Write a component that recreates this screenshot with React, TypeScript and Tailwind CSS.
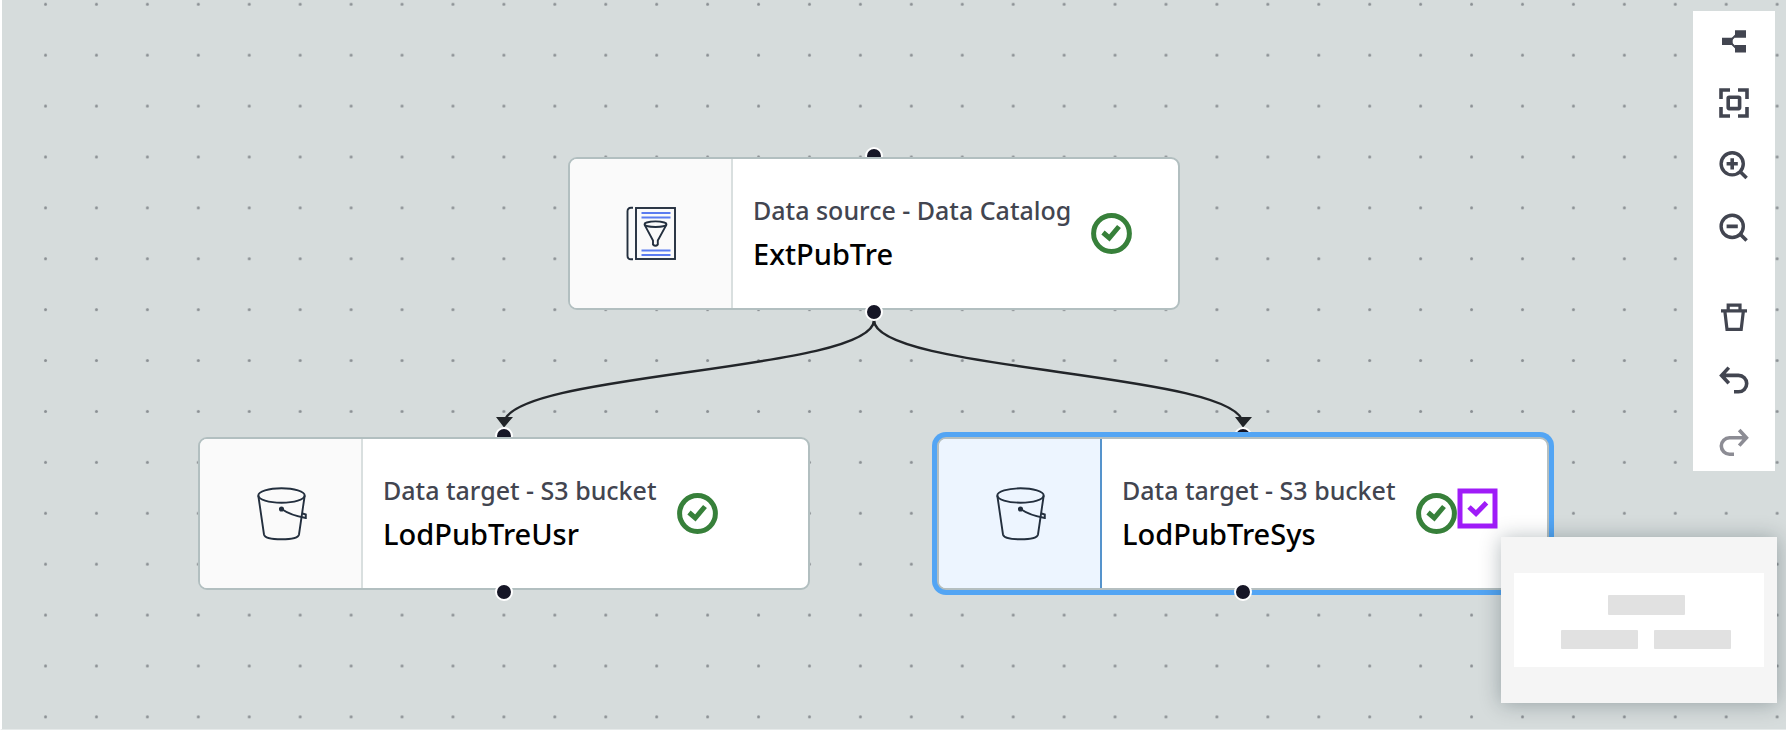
import React from "react";

const INK = "#232f3e";

function CatalogIcon() {
  return (
    <svg width="52" height="56" viewBox="0 0 52 56" fill="none" stroke={INK} strokeWidth="1.9" aria-hidden="true">
      <path d="M8 1.8H6Q2.5 1.8 2.5 5.3V49.7Q2.5 53.2 6 53.2H8" />
      <rect x="11" y="2" width="39" height="51" />
      <g stroke="#5b7cf0" strokeWidth="1.9">
        <path d="M16.5 7H45.5M16.5 11.5H45.5M16.5 44.5H45.5M16.5 49H45.5" />
      </g>
      <ellipse cx="30.5" cy="18.2" rx="11" ry="2.8" />
      <path d="M19.5 18.6L28 34.5V38.5Q30.5 41 32.8 38.5V34.5L41.5 18.6" />
    </svg>
  );
}

function BucketIcon() {
  return (
    <svg width="52" height="56" viewBox="-1 0 52 56" fill="none" stroke={INK} strokeWidth="1.9" aria-hidden="true">
      <ellipse cx="25.5" cy="9.5" rx="23.2" ry="7.2" />
      <path d="M2.3 9.5L8 48.5Q9 53.3 25.5 53.3Q42 53.3 43 48.5L48.7 9.5" />
      <circle cx="25.5" cy="23" r="1.6" fill={INK} />
      <path d="M25.5 23Q35 29.5 49.8 32V28.5L46.5 27.5" />
    </svg>
  );
}

function CheckCircle() {
  return (
    <svg className="shrink-0" width="41" height="41" viewBox="0 0 41 41" fill="none" stroke="#37803a" strokeWidth="5" role="img" aria-label="Valid">
      <circle cx="20.5" cy="20.5" r="17.9" />
      <path d="M12 19.5L18.3 25L28 13.5" />
    </svg>
  );
}

function CheckSquare() {
  return (
    <svg className="mb-[10px] shrink-0" width="41" height="41" viewBox="0 0 41 41" fill="none" stroke="#9f1cf8" strokeWidth="5" role="img" aria-label="Checked">
      <rect x="3" y="3" width="35" height="35" />
      <path d="M12 19L19 25.5L29.5 14.8" />
    </svg>
  );
}

type NodeProps = {
  kind: string;
  name: string;
  icon: React.ReactNode;
  place: string;
  selected?: boolean;
};

const PORT = "absolute left-1/2 size-[18px] -translate-x-1/2 rounded-full border-2 border-white bg-[#161626]";

function FlowNode({ kind, name, icon, place, selected = false }: NodeProps) {
  return (
    <div className={`absolute w-[612px] ${place}`}>
      <span className={`${PORT} -top-[10px]`} />
      <div
        className={`relative flex h-[153px] overflow-hidden rounded-[9px] border-2 bg-white ${
          selected ? "border-[#b5bfc0] ring-5 ring-[#53a5f4]" : "border-[#b2bfc0]"
        }`}
      >
        <div
          className={`flex w-[163px] shrink-0 items-center justify-center border-r-2 ${
            selected ? "border-[#5593cc] bg-[#edf5ff]" : "border-[#d9dfdf] bg-[#fafafa]"
          }`}
        >
          {icon}
        </div>
        <div className="flex items-center pl-5">
          <div className="pr-5 whitespace-nowrap">
            <div className="text-[25px] leading-10 font-medium text-[#424550]">{kind}</div>
            <div className="text-[29px] leading-12 font-medium text-black">{name}</div>
          </div>
          <CheckCircle />
          {selected && <CheckSquare />}
        </div>
      </div>
      <span className={`${PORT} -bottom-[11px]`} />
    </div>
  );
}

type ToolProps = { label: string; disabled?: boolean; gap?: boolean; children: React.ReactNode };

function Tool({ label, disabled = false, gap = false, children }: ToolProps) {
  return (
    <button
      type="button"
      aria-label={label}
      disabled={disabled}
      className={`flex h-[30px] w-[30px] items-center justify-center ${gap ? "mt-7" : ""} ${
        disabled ? "text-[#8c8c94]" : "text-[#424550]"
      }`}
    >
      <svg width="30" height="30" viewBox="0 0 30 30" fill="none" stroke="currentColor" strokeWidth="3.6" aria-hidden="true">
        {children}
      </svg>
    </button>
  );
}

function Toolbar() {
  return (
    <div className="absolute top-[11px] right-[11px] flex w-[82px] flex-col items-center gap-8 bg-white pt-[15px] pb-[15px]">
      <Tool label="Layout">
        <g fill="currentColor" stroke="none">
          <path d="M3 11.7H13.7V19H3ZM16 4.3H27V11.7H16ZM16 19H27V26.6H16Z" />
        </g>
        <path d="M12.5 13.5L17 9M12.5 17.5L17 22" strokeWidth="1.8" />
      </Tool>
      <Tool label="Fit to screen">
        <path d="M2 11V2H11M19 2H28V11M28 19V28H19M11 28H2V19" />
        <rect x="9.2" y="9.2" width="11.4" height="11.4" rx="1" />
      </Tool>
      <Tool label="Zoom in">
        <circle cx="13.2" cy="13.8" r="11.1" strokeWidth="3.4" />
        <path d="M21 21.4L27.6 28M13.2 8.2V19.4M7.6 13.8H18.8" />
      </Tool>
      <Tool label="Zoom out">
        <circle cx="13.2" cy="14.4" r="11.1" strokeWidth="3.4" />
        <path d="M21 22L27.6 28.6M7.6 14.4H18.8" />
      </Tool>
      <Tool label="Delete" gap>
        <path d="M2 8.8H28M9.2 8.8V3.2H21V8.8M5.8 8.8L8 27.4H22.2L24.4 8.8" strokeWidth="3.2" />
      </Tool>
      <Tool label="Undo">
        <path d="M9.8 3.6L2.6 11.4L9.8 19.2M3 11.4H19.5A8.2 8.2 0 0 1 19.5 27.8H15" />
      </Tool>
      <Tool label="Redo" disabled>
        <path d="M20.2 4L27.4 11.8L20.2 19.6M27 11.8H10.5A8.2 8.2 0 0 0 10.5 28.2H15" />
      </Tool>
    </div>
  );
}

function MiniMap() {
  return (
    <div className="absolute right-[9px] bottom-[26px] bg-[#f5f5f5] px-[13px] py-9 shadow-[0_1px_20px_rgba(0,28,36,0.3)]">
      <svg className="block bg-white" width="250" height="94" viewBox="0 0 250 94" fill="#e1e1e1" role="img" aria-label="Overview map">
        <rect x="94" y="22" width="77" height="20" rx="1" />
        <rect x="47" y="57" width="77" height="19" rx="1" />
        <rect x="140" y="57" width="77" height="19" rx="1" />
      </svg>
    </div>
  );
}

export default function App() {
  return (
    <main className="relative min-h-screen overflow-hidden border-b border-l-2 border-b-[#e6eaea] border-l-white bg-[#d6dcdc] font-['Noto_Sans',sans-serif]">
      <svg className="absolute inset-0 size-full" aria-hidden="true">
        <defs>
          <pattern id="dots" x="18" y="-21.2" width="50.93" height="50.9" patternUnits="userSpaceOnUse">
            <circle cx="25.5" cy="25.5" r="1.5" fill="#8a8f93" />
          </pattern>
        </defs>
        <rect width="100%" height="100%" fill="url(#dots)" />
        <g fill="none" stroke="#222529" strokeWidth="2.5">
          <path d="M872 320C872 372 502 372 502 424" />
          <path d="M872 320C872 372 1241 372 1241 424" />
        </g>
        <g fill="#222529">
          <path d="M494 417H511L502 427.5ZM1233 417H1250L1241 427.5Z" />
        </g>
      </svg>
      <FlowNode place="left-[566px] top-[157px]" kind="Data source - Data Catalog" name="ExtPubTre" icon={<CatalogIcon />} />
      <FlowNode place="left-[196px] top-[437px]" kind="Data target - S3 bucket" name="LodPubTreUsr" icon={<BucketIcon />} />
      <FlowNode place="left-[935px] top-[437px]" kind="Data target - S3 bucket" name="LodPubTreSys" icon={<BucketIcon />} selected />
      <Toolbar />
      <MiniMap />
    </main>
  );
}
